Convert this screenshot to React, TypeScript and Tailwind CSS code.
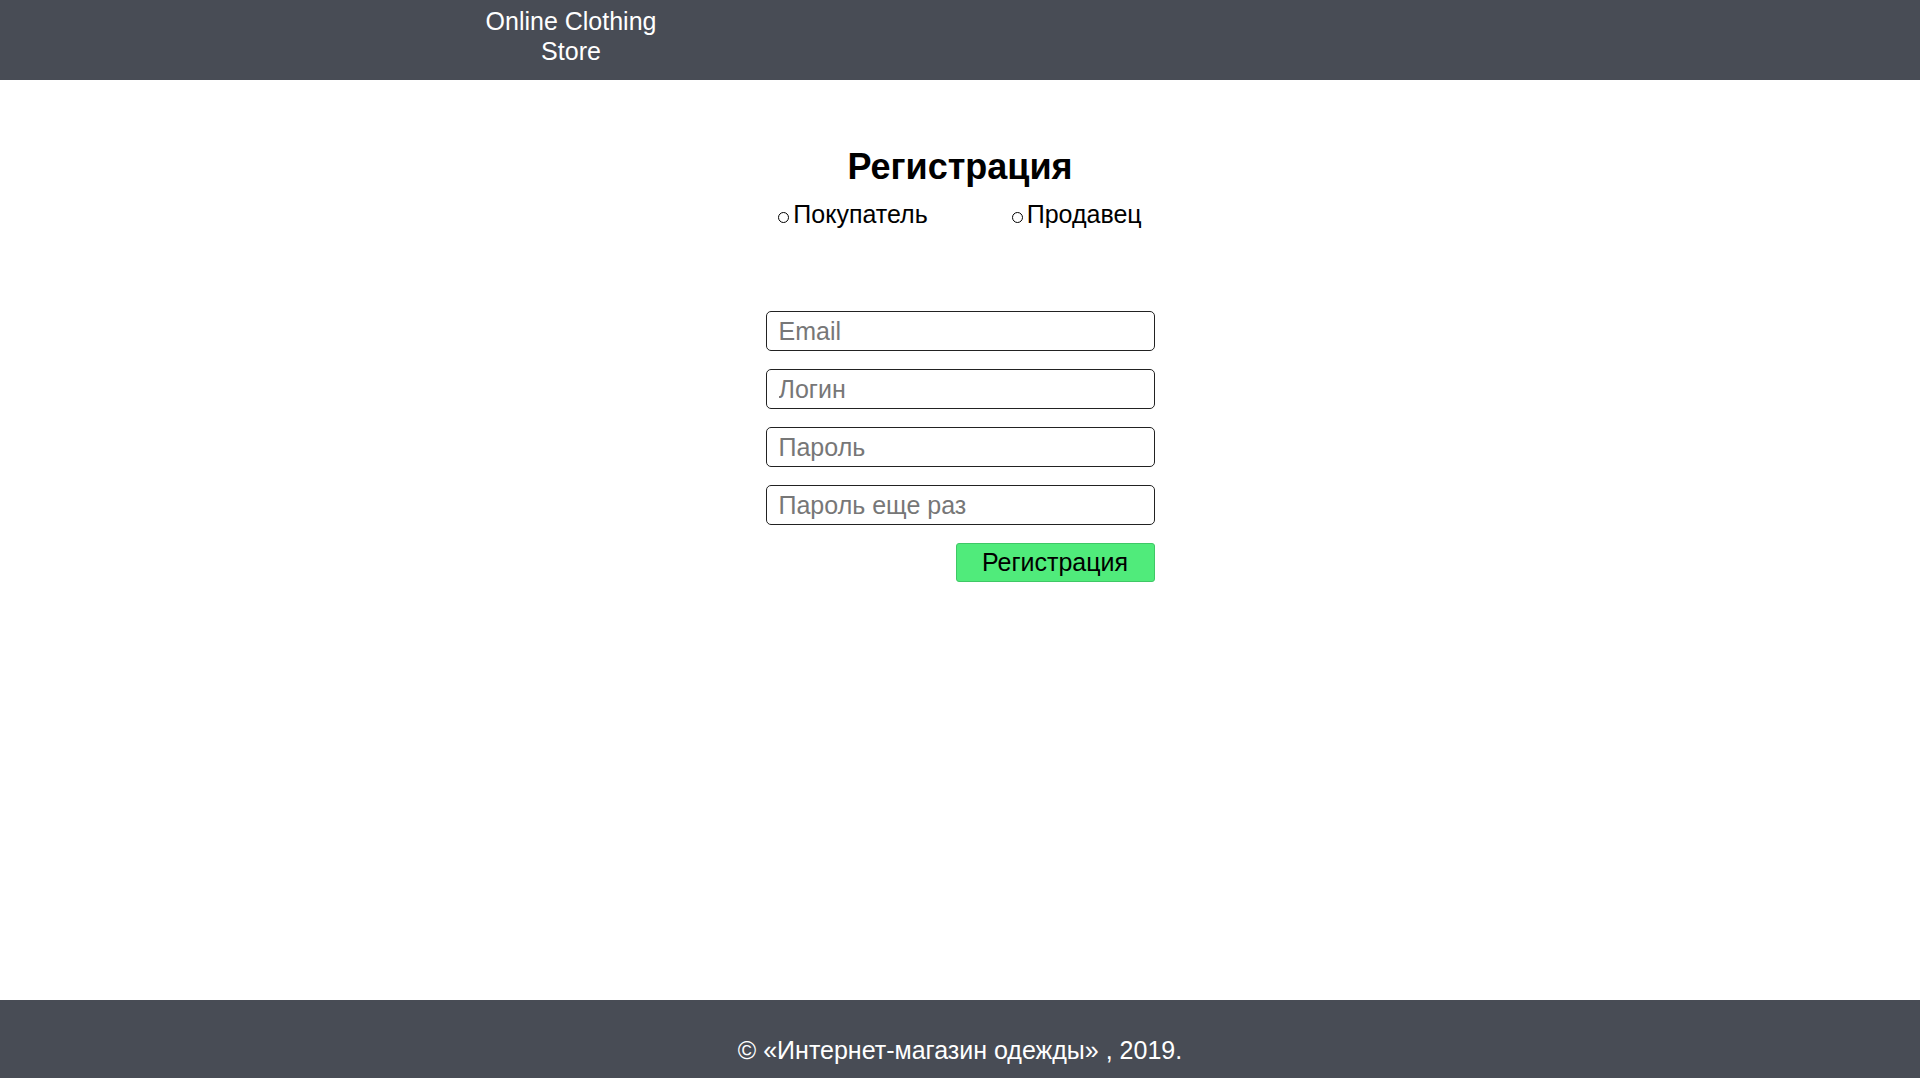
import { useState } from "react";

const font = { fontFamily: '"Liberation Sans", Arial, sans-serif' };

function Radio({ label, checked, onClick }: { label: string; checked: boolean; onClick: () => void }) {
  return (
    <label onClick={onClick} className="cursor-pointer text-[25px] leading-[29px] text-black">
      <span className="inline-block w-[11px] h-[11px] rounded-full border border-black mr-[4px] relative">
        {checked && <span className="absolute inset-[2px] rounded-full bg-black" />}
      </span>
      {label}
    </label>
  );
}

const inputCls =
  "h-[40px] w-full border-[1.5px] border-[#222] rounded-[5px] px-[12px] text-[25px] placeholder:text-[#777] outline-none";

export default function App() {
  const [role, setRole] = useState<"buyer" | "seller" | null>(null);

  return (
    <div style={font} className="min-h-screen flex flex-col bg-white">
      {/* Header */}
      <header className="h-[80px] bg-[#484c55] shrink-0">
        <div className="ml-[481px] w-[180px] pt-[6px] text-center text-white text-[25px] leading-[30px]">
          Online Clothing Store
        </div>
      </header>

      {/* Form */}
      <main className="flex-1 flex flex-col items-center pt-[66px]">
        <h1 className="text-[36px] leading-[41px] font-bold text-black">Регистрация</h1>
        <div className="flex gap-[84px] mt-[13px]">
          <Radio label="Покупатель" checked={role === "buyer"} onClick={() => setRole("buyer")} />
          <Radio label="Продавец" checked={role === "seller"} onClick={() => setRole("seller")} />
        </div>

        <form className="w-[389px] mt-[82px] flex flex-col gap-[18px]" onSubmit={(e) => e.preventDefault()}>
          <input type="email" placeholder="Email" className={inputCls} />
          <input type="text" placeholder="Логин" className={inputCls} />
          <input type="password" placeholder="Пароль" className={inputCls} />
          <input type="password" placeholder="Пароль еще раз" className={inputCls} />
          <div className="flex justify-end">
            <button
              type="submit"
              className="w-[199px] h-[39px] bg-[#50eb7b] border border-[#3fc866] rounded-[3px] text-[25px] leading-[29px] text-black"
            >
              Регистрация
            </button>
          </div>
        </form>
      </main>

      {/* Footer */}
      <footer className="h-[78px] bg-[#484c55] shrink-0 pt-[36px] text-center text-white text-[25px] leading-[29px]">
        © «Интернет-магазин одежды» , 2019.
      </footer>
    </div>
  );
}
